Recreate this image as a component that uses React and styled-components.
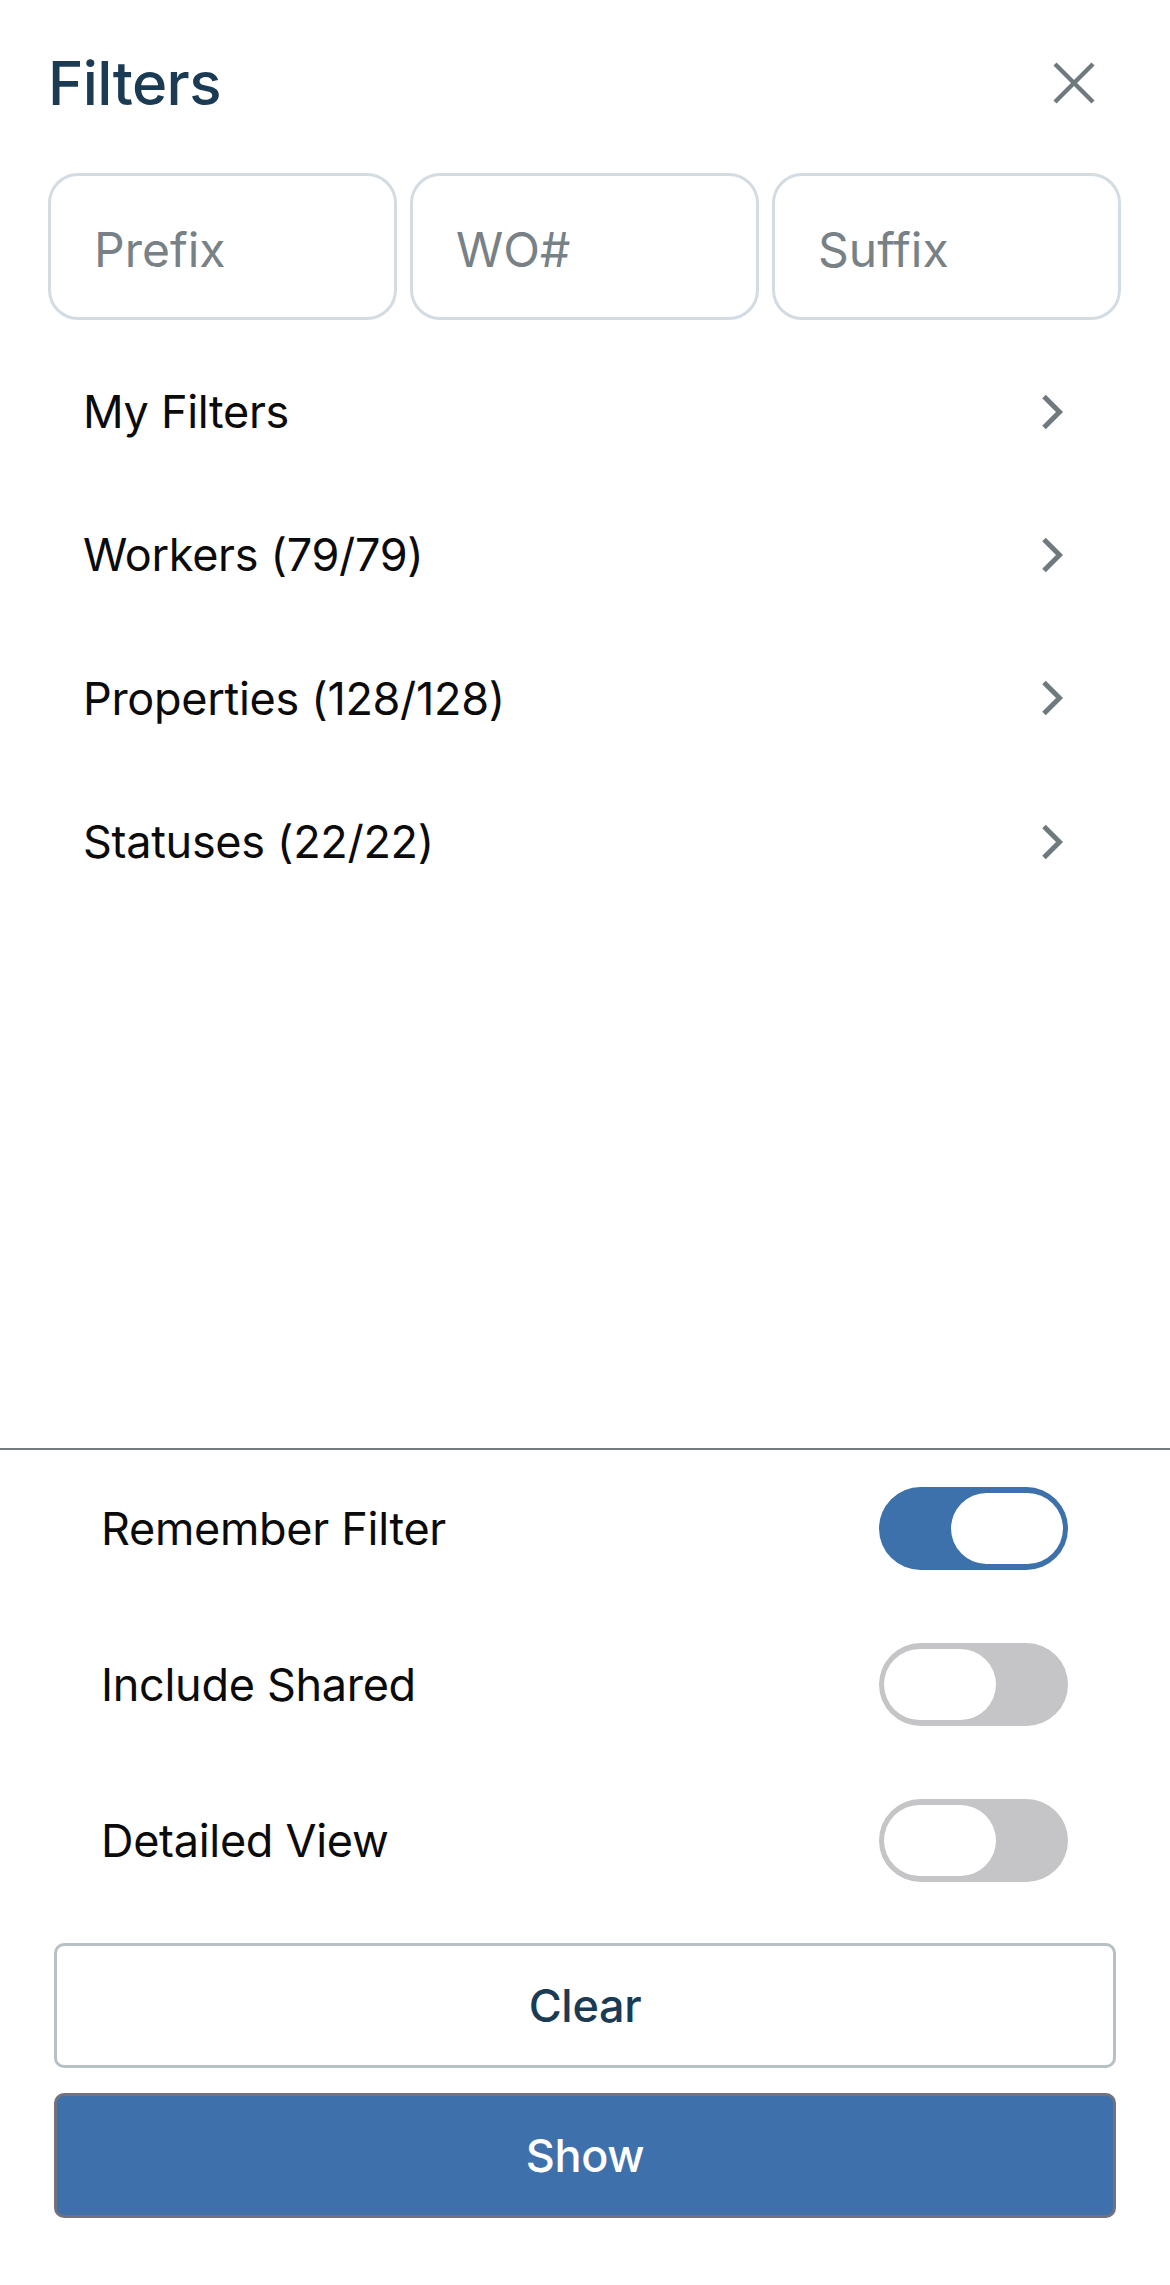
import React from "react";
import styled, { createGlobalStyle } from "styled-components";

const Global = createGlobalStyle`
  html, body { margin: 0; padding: 0; background: #ffffff; }
  body { font-family: Inter, "Noto Sans", "Liberation Sans", sans-serif; -webkit-font-smoothing: antialiased; }
  * { box-sizing: border-box; }
`;

const Page = styled.div`
  width: 1170px;
  min-height: 2285px;
  display: flex;
  flex-direction: column;
  background: #ffffff;
`;

const Header = styled.header`
  display: flex;
  align-items: center;
  justify-content: space-between;
  padding: 47px 75px 0 48px;
`;

const Title = styled.h1`
  margin: 0;
  font-size: 60px;
  line-height: 72px;
  font-weight: 500;
  color: #1b3a53;
  letter-spacing: -0.6px;
`;

const CloseButton = styled.button`
  border: none;
  background: none;
  padding: 0;
  width: 42px;
  height: 42px;
  display: flex;
  cursor: pointer;
`;

const InputRow = styled.div`
  display: grid;
  grid-template-columns: repeat(3, 1fr);
  gap: 13px;
  margin-top: 54px;
  padding: 0 49px 0 48px;
`;

const Field = styled.input`
  height: 147px;
  width: 100%;
  border: 3px solid #d2dce2;
  border-radius: 30px;
  padding: 6px 20px 0 43px;
  font-family: Inter, "Noto Sans", sans-serif;
  font-size: 48px;
  color: #1b3a53;
  background: #fff;
  outline: none;
  &::placeholder { color: #778186; }
`;

const List = styled.nav`
  margin-top: 20px;
  display: flex;
  flex-direction: column;
`;

const ListRow = styled.div`
  height: 143.3px;
  display: flex;
  align-items: center;
  justify-content: space-between;
  padding: 0 108px 0 83px;
  font-size: 45px;
  letter-spacing: -0.3px;
  color: #0b0b0b;
  cursor: pointer;
`;

const Spacer = styled.div`
  flex: 1;
`;

const Footer = styled.footer`
  border-top: 2px solid #747c7f;
  display: flex;
  flex-direction: column;
  padding-bottom: 67px;
`;

const ToggleRow = styled.div`
  height: 156px;
  display: flex;
  align-items: center;
  justify-content: space-between;
  padding: 0 102px 0 101px;
  font-size: 45px;
  letter-spacing: -0.3px;
  color: #0b0b0b;
`;

const Track = styled.div`
  width: 189px;
  height: 83px;
  border-radius: 42px;
  background: ${(p) => (p.$on ? "#3d71ab" : "#c5c5c7")};
  display: flex;
  align-items: center;
  justify-content: ${(p) => (p.$on ? "flex-end" : "flex-start")};
  padding: 0 5px;
`;

const Knob = styled.div`
  width: 112px;
  height: 71px;
  border-radius: 36px;
  background: #ffffff;
`;

const Buttons = styled.div`
  display: flex;
  flex-direction: column;
  gap: 25px;
  margin-top: 25px;
  padding: 0 54px;
`;

const ActionButton = styled.button`
  height: 125px;
  width: 100%;
  border-radius: 10px;
  border: 3px solid ${(p) => (p.$primary ? "#727180" : "#b7c0c5")};
  background: ${(p) => (p.$primary ? "#3e71ac" : "#ffffff")};
  color: ${(p) => (p.$primary ? "#ffffff" : "#1b3a53")};
  font-family: Inter, "Noto Sans", sans-serif;
  font-size: 45px;
  font-weight: 500;
  letter-spacing: -0.3px;
  cursor: pointer;
`;

const Chevron = () => (
  <svg width="24" height="36" viewBox="0 0 24 36" style={{ marginRight: -2 }}>
    <polyline points="4,2.5 19.5,18 4,33.5" fill="none" stroke="#6f7a7f" strokeWidth="5" />
  </svg>
);

const XIcon = () => (
  <svg width="42" height="42" viewBox="0 0 42 42">
    <line x1="2" y1="2" x2="40" y2="40" stroke="#6f7a7f" strokeWidth="4.5" />
    <line x1="40" y1="2" x2="2" y2="40" stroke="#6f7a7f" strokeWidth="4.5" />
  </svg>
);

const items = ["My Filters", "Workers (79/79)", "Properties (128/128)", "Statuses (22/22)"];
const toggles = [
  { label: "Remember Filter", on: true },
  { label: "Include Shared", on: false },
  { label: "Detailed View", on: false },
];

export default function App() {
  return (
    <>
      <Global />
      <Page>
        <Header>
          <Title>Filters</Title>
          <CloseButton aria-label="Close">
            <XIcon />
          </CloseButton>
        </Header>
        <InputRow>
          <Field placeholder="Prefix" />
          <Field placeholder="WO#" />
          <Field placeholder="Suffix" />
        </InputRow>
        <List>
          {items.map((t) => (
            <ListRow key={t}>
              <span>{t}</span>
              <Chevron />
            </ListRow>
          ))}
        </List>
        <Spacer />
        <Footer>
          {toggles.map((t) => (
            <ToggleRow key={t.label}>
              <span>{t.label}</span>
              <Track $on={t.on}>
                <Knob />
              </Track>
            </ToggleRow>
          ))}
          <Buttons>
            <ActionButton>Clear</ActionButton>
            <ActionButton $primary>Show</ActionButton>
          </Buttons>
        </Footer>
      </Page>
    </>
  );
}
